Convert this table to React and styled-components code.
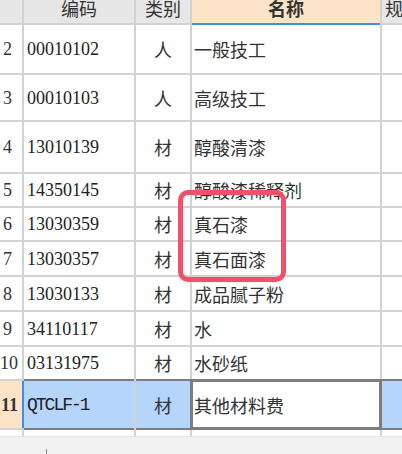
import React from "react";
import styled, { createGlobalStyle, css } from "styled-components";

const rows = [
  { no: 2, code: "00010102", type: "人", name: "一般技工", h: 48 },
  { no: 3, code: "00010103", type: "人", name: "高级技工", h: 45 },
  { no: 4, code: "13010139", type: "材", name: "醇酸清漆", h: 50 },
  { no: 5, code: "14350145", type: "材", name: "醇酸漆稀释剂", h: 32 },
  { no: 6, code: "13030359", type: "材", name: "真石漆", h: 32 },
  { no: 7, code: "13030357", type: "材", name: "真石面漆", h: 33 },
  { no: 8, code: "13030133", type: "材", name: "成品腻子粉", h: 33 },
  { no: 9, code: "34110117", type: "材", name: "水", h: 33 },
  { no: 10, code: "03131975", type: "材", name: "水砂纸", h: 32 },
  { no: 11, code: "QTCLF-1", type: "材", name: "其他材料费", h: 47, active: true, mono: true },
];

const GlobalStyle = createGlobalStyle`
  html, body {
    margin: 0;
    padding: 0;
    background: #fff;
  }
`;

const Page = styled.div`
  position: relative;
  width: 402px;
  height: 454px;
  overflow: hidden;
  background: #fff;
  color: #333;
  font-family: "Noto Sans CJK SC", "Noto Sans", sans-serif;
`;

const Table = styled.div`
  display: flex;
  flex-direction: column;
  gap: 2px;
  background: #d2d2d2;
`;

const Row = styled.div`
  display: grid;
  grid-template-columns: 22px 110px 54px 188px 1fr;
  column-gap: 2px;
  height: ${(p) => p.$h}px;
`;

const HeadCell = styled.div`
  display: flex;
  align-items: center;
  justify-content: ${(p) => (p.$left ? "flex-start" : "center")};
  padding: 0 0 7px ${(p) => (p.$left ? "3px" : "0")};
  background: ${(p) => (p.$current ? "#fde4c8" : "#e7e7e7")};
  font-size: 18px;
  line-height: 18px;
  font-weight: ${(p) => (p.$current ? 700 : 400)};
  color: #333;
  white-space: nowrap;
  overflow: hidden;
  ${(p) =>
    p.$current &&
    css`
      box-shadow: 0 2px 0 #3b8ef0;
    `}
`;

const Cell = styled.div`
  display: flex;
  align-items: center;
  min-width: 0;
  overflow: hidden;
  white-space: nowrap;
  background: #fff;
  font-size: 18px;
  line-height: 20px;
`;

const NoCell = styled(Cell)`
  padding-left: ${(p) => (p.$wide ? "0" : "3px")};
  font-family: "Liberation Serif", serif;
  color: #333;
  ${(p) =>
    p.$active &&
    css`
      background: #fde4c8;
      font-weight: 700;
      padding-left: 1px;
    `}
`;

const selected = css`
  background: #b5d5fb;
  box-shadow: 0 -2px 0 #7d7d7d, 0 2px 0 #7d7d7d;
`;

const CodeCell = styled(Cell)`
  padding-left: 3px;
  font-family: ${(p) => (p.$mono ? '"Liberation Mono", monospace' : '"Liberation Serif", serif')};
  letter-spacing: ${(p) => (p.$mono ? "-2px" : "0")};
  color: #222;
  ${(p) =>
    p.$active &&
    css`
      ${selected};
      box-shadow: -2px 0 0 #3b8ef0, 0 -2px 0 #7d7d7d, 0 2px 0 #7d7d7d;
    `}
`;

const TypeCell = styled(Cell)`
  justify-content: center;
  color: #333;
  ${(p) => p.$active && selected}
`;

const NameCell = styled(Cell)`
  padding-left: 2px;
  color: #333;
  ${(p) =>
    p.$active &&
    css`
      box-shadow: 0 0 0 2px #7d7d7d, inset 0 0 0 1px #7d7d7d;
      position: relative;
    `}
`;

const SpecCell = styled(Cell)`
  ${(p) => p.$active && selected}
`;

const StubCell = styled.div`
  background: #fff;
`;

const StatusBar = styled.div`
  display: flex;
  align-items: flex-end;
  height: 18px;
  padding-left: 46px;
  border-top: 1px solid #e4e4e4;
  background: #f1f1f1;
`;

const Tick = styled.span`
  width: 1px;
  height: 6px;
  background: #8a8a8a;
`;

const Highlight = styled.div`
  position: absolute;
  left: 178px;
  top: 190px;
  width: 108px;
  height: 92px;
  box-sizing: border-box;
  border: 5px solid #f24f69;
  border-radius: 10px;
  pointer-events: none;
`;

export default function App() {
  return (
    <Page>
      <GlobalStyle />
      <Table>
        <Row $h={23}>
          <HeadCell />
          <HeadCell>编码</HeadCell>
          <HeadCell>类别</HeadCell>
          <HeadCell $current>名称</HeadCell>
          <HeadCell $left>规格型号</HeadCell>
        </Row>
        {rows.map((r) => (
          <Row key={r.no} $h={r.h}>
            <NoCell $wide={r.no >= 10} $active={r.active}>
              {r.no}
            </NoCell>
            <CodeCell $active={r.active} $mono={r.mono}>
              {r.code}
            </CodeCell>
            <TypeCell $active={r.active}>{r.type}</TypeCell>
            <NameCell $active={r.active}>{r.name}</NameCell>
            <SpecCell $active={r.active} />
          </Row>
        ))}
        <Row $h={6}>
          <StubCell />
          <StubCell />
          <StubCell />
          <StubCell />
          <StubCell />
        </Row>
      </Table>
      <StatusBar>
        <Tick />
      </StatusBar>
      <Highlight />
    </Page>
  );
}
